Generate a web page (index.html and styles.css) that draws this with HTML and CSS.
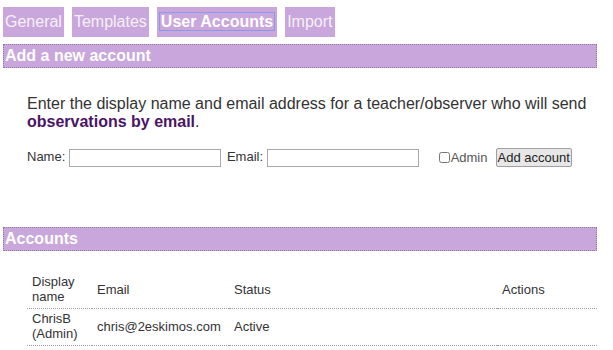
FILE: index.html
```html
<!DOCTYPE html>
<html lang="en">
<head>
    <meta charset="UTF-8">
    <title>User Accounts</title>
    <link rel="stylesheet" href="styles.css">
</head>
<body>
    <div class="tabs">
        <a class="tab" href="#">General</a>
        <a class="tab" href="#">Templates</a>
        <a class="tab active" href="#"><span class="focus">User Accounts</span></a>
        <a class="tab" href="#">Import</a>
    </div>

    <h2 class="section-title">Add a new account</h2>
    <div class="section-body">
        <p class="intro">Enter the display name and email address for a teacher/observer who will send <strong>observations by email</strong>.</p>
        <form class="add-form">
            <label>Name: <input type="text" class="field"></label>
            <label>Email: <input type="text" class="field"></label>
            <label class="check"><input type="checkbox">Admin</label>
            <button type="button">Add account</button>
        </form>
    </div>

    <h2 class="section-title accounts-title">Accounts</h2>
    <table class="accounts">
        <tr>
            <th class="col-name">Display name</th>
            <th class="col-email">Email</th>
            <th class="col-status">Status</th>
            <th>Actions</th>
        </tr>
        <tr>
            <td>ChrisB (Admin)</td>
            <td>chris@2eskimos.com</td>
            <td>Active</td>
            <td></td>
        </tr>
    </table>
</body>
</html>
```

FILE: styles.css
```css
body {
    font-family: "Liberation Sans", Arial, sans-serif;
    margin: 0;
    padding: 7px 3px;
    color: #333;
}
.tabs {
    display: flex;
    gap: 8px;
}
.tab {
    background-color: #c9a6dc;
    color: #f6f0f9;
    font-size: 16px;
    line-height: 30px;
    padding: 0 2px;
    text-decoration: none;
}
.tab.active {
    color: #fff;
    font-weight: bold;
    padding: 0 3px;
}
.focus {
    outline: 1px solid #8a9ae6;
    outline-offset: 0;
    padding: 0 1px;
}
.section-title {
    background-color: #c9a6dc;
    border: 1px dotted #8f7a99;
    color: #fff;
    font-size: 16px;
    font-weight: bold;
    line-height: 22px;
    margin: 7px 0 0 0;
    padding: 0 1px;
    width: 590px;
}
.section-body {
    padding-left: 24px;
}
.intro {
    font-size: 16px;
    line-height: 18px;
    margin: 27px 0 0 0;
    color: #333;
}
.intro strong {
    color: #4b1466;
}
.add-form {
    display: flex;
    align-items: center;
    margin-top: 17px;
    font-size: 13px;
}
.add-form label {
    margin-right: 6px;
}
.field {
    width: 146px;
    height: 14px;
    border: 1px solid #a9a9a9;
    padding: 1px 2px;
    margin: 0;
    vertical-align: middle;
}
.check {
    display: flex;
    align-items: center;
    margin-left: 14px;
    color: #555;
}
.check input {
    margin: 0 1px 0 0;
    width: 11px;
    height: 11px;
}
button {
    font-family: "Liberation Sans", Arial, sans-serif;
    font-size: 13px;
    color: #222;
    background-color: #e7e7e7;
    border: 1px solid #a0a0a0;
    border-radius: 2px;
    padding: 1px 1px;
    margin-left: 2px;
}
.accounts-title {
    margin-top: 60px;
}
.accounts {
    border-collapse: collapse;
    margin: 21px 0 0 24px;
    width: 570px;
    font-size: 13px;
}
.accounts th, .accounts td {
    text-align: left;
    font-weight: normal;
    padding: 2px 5px 4px 5px;
    line-height: 15px;
    border-bottom: 1px dotted #999;
}
.col-name {
    width: 55px;
}
.col-email {
    width: 127px;
}
.col-status {
    width: 258px;
}
```
